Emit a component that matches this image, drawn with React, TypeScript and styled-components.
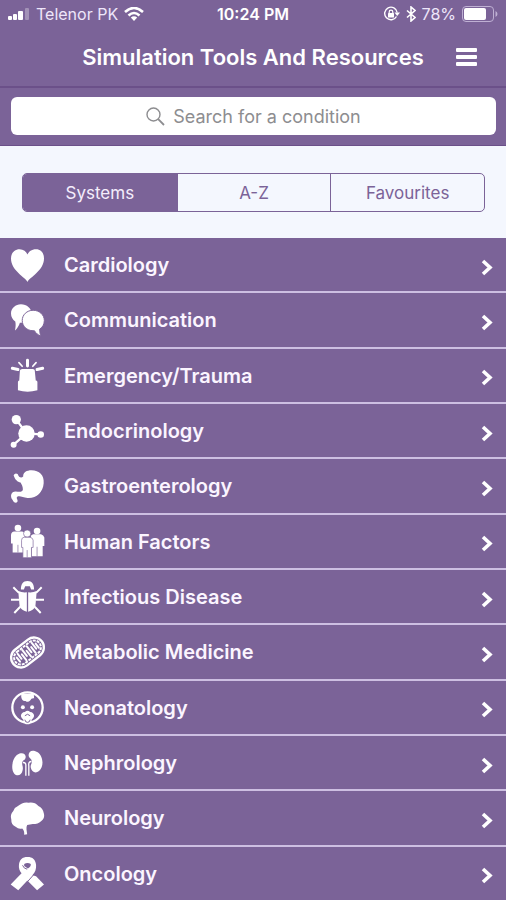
import React, { useState } from "react";
import styled, { createGlobalStyle } from "styled-components";

const purple = "#7b6398";
const purpleDark = "#6b5089";
const pale = "#f4f7fe";
const line = "#cdbfe2";

const GlobalStyle = createGlobalStyle`
  *, *::before, *::after { box-sizing: border-box; }
  body {
    margin: 0;
    background: ${purple};
    font-family: Inter, "Liberation Sans", sans-serif;
  }
  button, input { font: inherit; }
`;

const Page = styled.div`
  display: flex;
  flex-direction: column;
  min-height: 100vh;
  overflow: hidden;
  background: ${purple};
`;

const StatusBar = styled.div`
  display: grid;
  grid-template-columns: 1fr auto 1fr;
  align-items: center;
  height: 28px;
  padding: 0 8px;
  color: #eee6fa;
  font-size: 16px;
  line-height: 20px;
`;

const StatusGroup = styled.div<{ $end?: boolean }>`
  display: flex;
  align-items: center;
  justify-content: ${(p) => (p.$end ? "flex-end" : "flex-start")};
  gap: 6px;
  white-space: nowrap;
`;

const Clock = styled.time`
  color: #fff;
  font-weight: 600;
`;

const TitleBar = styled.header`
  display: grid;
  grid-template-columns: 1fr auto 1fr;
  align-items: center;
  height: 60px;
  border-bottom: 2px solid ${purpleDark};
`;

const Title = styled.h1`
  grid-column: 2;
  margin: 0;
  color: #fff;
  font-size: 22px;
  font-weight: 600;
  line-height: 28px;
  white-space: nowrap;
`;

const MenuButton = styled.button`
  justify-self: end;
  display: flex;
  margin-right: 25px;
  padding: 4px;
  border: 0;
  background: none;
  color: #fff;
  cursor: pointer;
`;

const SearchBar = styled.div`
  padding: 9px 10px 10px 11px;
  border-bottom: 1px solid ${purpleDark};
`;

const SearchField = styled.label`
  display: flex;
  align-items: center;
  justify-content: center;
  gap: 8px;
  height: 38px;
  border-radius: 6px;
  background: #fff;
  color: #8d8d90;
  cursor: text;
`;

const SearchInput = styled.input`
  field-sizing: content;
  max-width: 90%;
  padding: 2px 0 0;
  border: 0;
  outline: 0;
  background: transparent;
  color: #333;
  font-size: 18px;
  line-height: 24px;
  &::placeholder { color: #8d8d90; opacity: 1; }
`;

const FilterPanel = styled.div`
  padding: 27px 21px 26px 22px;
  background: ${pale};
`;

const Segments = styled.div`
  display: grid;
  grid-template-columns: repeat(3, minmax(0, 1fr));
  height: 39px;
  overflow: hidden;
  border: 1px solid ${purple};
  border-radius: 5px;
`;

const Segment = styled.button<{ $active: boolean }>`
  padding: 0;
  border: 0;
  background: ${(p) => (p.$active ? purple : "transparent")};
  color: ${(p) => (p.$active ? "#f4edfc" : purple)};
  font-size: 17px;
  line-height: 22px;
  cursor: pointer;
  & + & { border-left: 1px solid ${purple}; }
`;

const SystemList = styled.ul`
  flex: 1;
  display: grid;
  grid-auto-rows: minmax(55px, 1fr);
  margin: 0 0 -2px;
  padding: 0;
  list-style: none;
`;

const SystemItem = styled.li`
  display: flex;
  border-bottom: 2px solid ${line};
`;

const SystemLink = styled.a`
  flex: 1;
  display: grid;
  grid-template-columns: 33px 1fr auto;
  column-gap: 20px;
  align-items: center;
  padding: 1px 13px 0 11px;
  color: #fbf5ff;
  font-size: 20px;
  font-weight: 600;
  line-height: 26px;
  text-decoration: none;
`;

const Glyph = styled.svg`
  display: block;
  width: 33px;
  height: 33px;
  overflow: visible;
  fill: #fff;
`;

const Chevron = styled.svg`
  display: block;
  margin-top: 4px;
`;

const icons: Record<string, React.ReactNode> = {
  heart: (
    <path d="M50 100C44 86 0 66 0 29C0 11 12 1 26 1C38 1 46 8 50 17C54 8 62 1 76 1C90 1 100 11 100 29C100 66 56 86 50 100Z" />
  ),
  chat: (
    <>
      <path d="M30 1C48 1 62 13 62 29S48 57 30 57L27 57C24 66 19 75 12 80C14 71 15 62 13 53C5 48 0 39 0 29C0 13 14 1 30 1Z" />
      <path
        d="M67 19C86 19 101 33 101 50C101 62 95 71 87 76C87 84 88 92 91 98C82 94 75 88 71 81L67 81C48 81 34 67 34 50S48 19 67 19Z"
        stroke={purple}
        strokeWidth="3"
      />
    </>
  ),
  siren: (
    <>
      <path d="M27 35Q28 30 34 30H66Q72 30 72 35L75 65H76Q80 65 80 70V95Q50 103 21 95V70Q21 65 25 65Z" />
      <g stroke="#fff" strokeLinecap="round">
        <path d="M50 4V21M4 28L21 32M96 28L79 32" strokeWidth="9" />
        <path d="M24 11L34 22M76 11L66 22" strokeWidth="5" />
      </g>
    </>
  ),
  molecule: (
    <>
      <path d="M16 14L47 56L90 59M47 56L8 90" fill="none" stroke="#fff" strokeWidth="7" />
      <circle cx="47" cy="56" r="25" />
      <circle cx="16" cy="14" r="14" />
      <circle cx="90" cy="59" r="10" />
      <circle cx="8" cy="90" r="9" />
    </>
  ),
  stomach: (
    <path d="M8 16Q12 8 20 12C24 22 30 26 37 20C36 7 48 1 62 1C86 1 101 16 99 40C97 68 76 87 50 85C36 83 26 77 19 81C14 86 23 90 19 97C15 102 7 98 5 91C-4 80 0 65 14 65C26 66 34 68 36 59C36 51 33 45 29 38C20 36 12 30 8 16Z" />
  ),
  people: (
    <>
      <circle cx="21" cy="9" r="10" />
      <path d="M10 20H34Q42 22 42 32V56H37V83H5V56H0V30Q1 21 10 20Z" />
      <circle cx="79" cy="18" r="10" />
      <path d="M67 28H91Q99 30 101 38V64H96V95H63V62L59 38Q60 29 67 28Z" />
      <path d="M21 60V83M79 66V95" stroke={purple} strokeWidth="2" />
      <g stroke={purple} strokeWidth="2">
        <circle cx="49" cy="26" r="11" />
        <path d="M40 37H58Q66 39 67 46V68H62V99H36V68H32V46Q32 38 40 37Z" />
        <path d="M49 76V98" />
      </g>
    </>
  ),
  bug: (
    <>
      <path d="M30 26C30 10 36 0 50 0S70 10 70 26H61L57 16H43L39 26Z" />
      <path d="M22 30Q35 36 48 34V93Q30 89 26 76ZM78 30Q65 36 52 34V93Q70 89 74 76Z" />
      <path d="M24 36L7 19M76 36L93 19M25 57H0M75 57H100M28 78L10 97M72 78L90 97" stroke="#fff" strokeWidth="6" fill="none" />
    </>
  ),
  mitochondrion: (
    <g transform="rotate(-38 50 50)" fill="none" stroke="#fff">
      <rect x="-5" y="20" width="110" height="60" rx="30" strokeWidth="7" />
      <rect x="4" y="29" width="92" height="42" rx="21" strokeWidth="6" strokeDasharray="9 3" />
      <path d="M15 42V58M24 35V54M33 66V44M42 34V57M51 66V44M60 34V57M69 66V44M78 35V57M86 60V44" strokeWidth="6" strokeLinecap="round" />
    </g>
  ),
  baby: (
    <>
      <circle cx="50" cy="50" r="46" fill="none" stroke="#fff" strokeWidth="7" />
      <path d="M31 8H69L70 22Q62 20 58 29Q51 36 44 30Q34 33 31 18Z" />
      <circle cx="36" cy="49" r="6" />
      <circle cx="64" cy="49" r="6" />
      <path d="M30 76Q31 65 42 64Q50 56 58 64Q69 65 70 76Q68 85 63 86Q61 101 50 101T37 86Q32 85 30 76Z" />
      <path d="M42 75Q50 66 58 75M42 87Q43 95 50 95T58 87" fill="none" stroke={purple} strokeWidth="3" />
    </>
  ),
  kidneys: (
    <>
      <path d="M26 20C38 16 47 24 44 33C42 40 34 40 34 48C33 56 38 60 35 71C33 85 19 90 10 81C-2 68 3 28 26 20Z" />
      <path d="M72 12C59 8 51 18 54 29C56 35 63 36 63 43C64 51 58 53 60 63C62 75 74 82 85 73C103 57 97 18 72 12Z" />
      <path d="M36 47Q46 46 45 58V87M62 44Q52 44 54 57V87" fill="none" stroke="#fff" strokeWidth="4" />
    </>
  ),
  brain: (
    <path d="M20 13Q36 -1 53 2Q72 -1 83 12Q97 18 100 36Q103 49 91 58Q82 67 66 67L49 70Q46 76 47 83L49 98L40 99Q41 86 34 80Q24 84 14 75Q0 69 1 54Q-4 38 7 27Q10 17 20 13Z" />
  ),
  ribbon: (
    <>
      <path d="M60 54L76 58L100 83L79 101L48 70Z" />
      <path
        fillRule="evenodd"
        d="M24 24C26 8 34 0 50 0S74 8 76 24C77 36 73 46 66 54L22 101L-1 83L32 49C26 42 23 34 24 24ZM40 21Q50 16 60 21Q61 29 51 35L40 27Z"
      />
      <path d="M72 50L49 76" stroke={purple} strokeWidth="3" />
      <path d="M35 25Q38 35 49 37" fill="none" stroke={purple} strokeWidth="3" />
    </>
  ),
};

const systems = [
  { name: "Cardiology", icon: "heart" },
  { name: "Communication", icon: "chat" },
  { name: "Emergency/Trauma", icon: "siren" },
  { name: "Endocrinology", icon: "molecule" },
  { name: "Gastroenterology", icon: "stomach" },
  { name: "Human Factors", icon: "people" },
  { name: "Infectious Disease", icon: "bug" },
  { name: "Metabolic Medicine", icon: "mitochondrion" },
  { name: "Neonatology", icon: "baby" },
  { name: "Nephrology", icon: "kidneys" },
  { name: "Neurology", icon: "brain" },
  { name: "Oncology", icon: "ribbon" },
];

const tabs = ["Systems", "A-Z", "Favourites"];

function SignalIcon() {
  return (
    <svg width="22" height="14" viewBox="0 0 22 14" fill="#fff" aria-hidden="true">
      <rect x="0" y="9" width="4" height="4" rx="1" />
      <rect x="5" y="7" width="4" height="6" rx="1" />
      <rect x="10" y="4" width="5" height="9" rx="1" />
      <rect x="17" y="1" width="4" height="12" rx="1" opacity="0.3" />
    </svg>
  );
}

function WifiIcon() {
  return (
    <svg width="20" height="14" viewBox="0 0 20 14" fill="none" stroke="#fff" strokeWidth="2.6" aria-hidden="true">
      <path d="M1 5Q10 -3 19 5" />
      <path d="M4.5 8.5Q10 3.5 15.5 8.5" />
      <path d="M10 14L6.800 10.600Q10 7.800 13.200 10.600Z" fill="#fff" stroke="none" />
    </svg>
  );
}

function RotationLockIcon() {
  return (
    <svg width="17" height="16" viewBox="0 0 17 16" fill="none" stroke="#fff" aria-hidden="true">
      <path d="M13.500 10.500A6.300 6.300 0 1 1 14.200 6.500" strokeWidth="1.4" />
      <path d="M11.500 6.500H17L14.200 10Z" fill="#fff" stroke="none" />
      <rect x="5" y="7" width="6" height="4.5" rx="0.6" fill="#fff" stroke="none" />
      <path d="M6.200 7.500V6A1.800 1.800 0 0 1 9.800 6V7.500" strokeWidth="1.2" />
    </svg>
  );
}

function BluetoothIcon() {
  return (
    <svg width="10" height="16" viewBox="0 0 10 16" fill="none" stroke="#fff" strokeWidth="1.6" aria-hidden="true">
      <path d="M1 4.500L9 11.500L5 15V1L9 4.500L1 11.500" />
    </svg>
  );
}

function BatteryIcon() {
  return (
    <svg width="36" height="16" viewBox="0 0 36 16" aria-hidden="true">
      <rect x="0.5" y="0.5" width="31" height="15" rx="3.5" fill="none" stroke="#bfb0d3" />
      <rect x="2" y="2" width="22" height="12" rx="2" fill="#fff" />
      <path d="M33.500 5Q35.500 6 35.500 8T33.500 11Z" fill="#bfb0d3" />
    </svg>
  );
}

export default function App() {
  const [active, setActive] = useState("Systems");
  return (
    <>
      <GlobalStyle />
      <Page>
        <StatusBar>
          <StatusGroup>
            <SignalIcon />
            <span>Telenor PK</span>
            <WifiIcon />
          </StatusGroup>
          <Clock>10:24 PM</Clock>
          <StatusGroup $end>
            <RotationLockIcon />
            <BluetoothIcon />
            <span>78%</span>
            <BatteryIcon />
          </StatusGroup>
        </StatusBar>
        <TitleBar>
          <Title>Simulation Tools And Resources</Title>
          <MenuButton type="button" aria-label="Menu">
            <svg width="21" height="18" viewBox="0 0 21 18" fill="currentColor">
              <rect x="0" y="0" width="21" height="4" rx="1" />
              <rect x="0" y="7" width="21" height="4" rx="1" />
              <rect x="0" y="14" width="21" height="4" rx="1" />
            </svg>
          </MenuButton>
        </TitleBar>
        <SearchBar>
          <SearchField>
            <svg width="19" height="19" viewBox="0 0 19 19" fill="none" stroke="currentColor" strokeWidth="1.4" aria-hidden="true">
              <circle cx="7.5" cy="7.5" r="6.5" />
              <path d="M12.200 12.200L18 18" strokeWidth="1.8" />
            </svg>
            <SearchInput type="text" aria-label="Search for a condition" placeholder="Search for a condition" />
          </SearchField>
        </SearchBar>
        <FilterPanel>
          <Segments>
            {tabs.map((tab) => (
              <Segment
                key={tab}
                type="button"
                $active={tab === active}
                aria-pressed={tab === active}
                onClick={() => setActive(tab)}
              >
                {tab}
              </Segment>
            ))}
          </Segments>
        </FilterPanel>
        <SystemList>
          {systems.map(({ name, icon }) => (
            <SystemItem key={name}>
              <SystemLink href={`#${icon}`}>
                <Glyph viewBox="0 0 100 100" aria-hidden="true">
                  {icons[icon]}
                </Glyph>
                <span>{name}</span>
                <Chevron width="12" height="17" viewBox="0 0 12 17" fill="none" stroke="#fff" strokeWidth="3.6" aria-hidden="true">
                  <path d="M2 2L9 8.500L2 15" />
                </Chevron>
              </SystemLink>
            </SystemItem>
          ))}
        </SystemList>
      </Page>
    </>
  );
}
